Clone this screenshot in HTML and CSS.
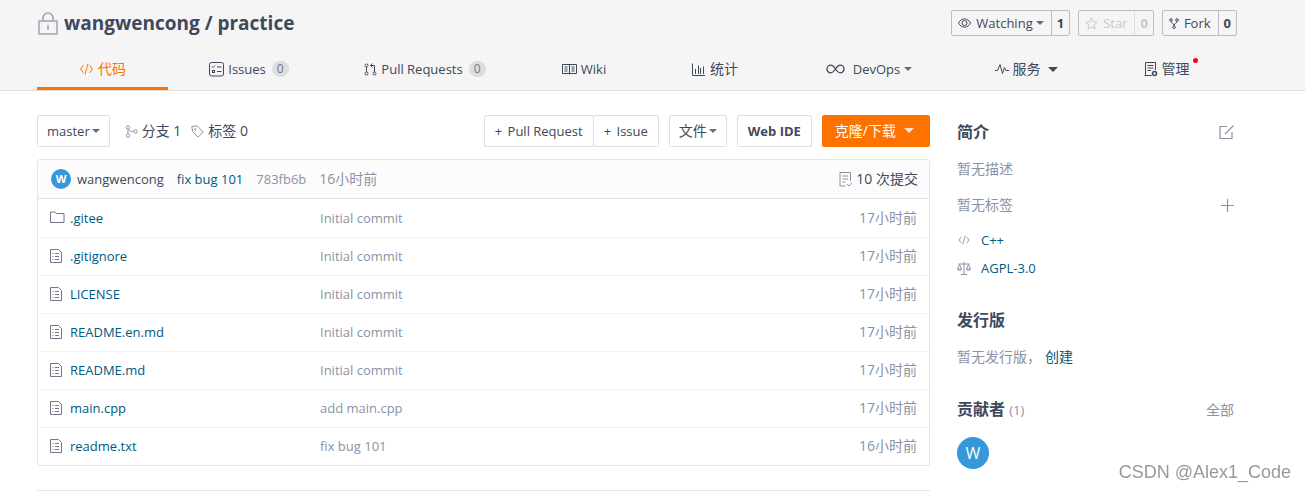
FILE: index.html
```html
<!DOCTYPE html>
<html lang="zh-CN">
<head>
    <meta charset="UTF-8">
    <title>wangwencong / practice</title>
    <link rel="stylesheet" href="styles.css">
</head>
<body>
    <!-- shared icons -->
    <svg class="sprite" aria-hidden="true">
        <symbol id="i-file" viewBox="0 0 12 14"><path d="M.5.5h8l3 3v10H.5z"/><path d="M2.500 4.500h1M5 4.500h4M2.500 7.500h1M5 7.500h4M2.500 10.500h1M5 10.500h4"/></symbol>
        <symbol id="i-code" viewBox="0 0 14 12"><path d="M4 2L1 6l3 4M10 2l3 4-3 4M8.500 0.500l-3 11"/></symbol>
    </svg>

    <header class="header">
        <div class="title-row">
            <h1>
                <svg class="lock" width="21" height="23" viewBox="0 0 21 23"><path d="M2 9h18v13H2zM6 9V6a5 5 0 0 1 10 0v3" stroke-width="1.500"/><path d="M11 13v5" stroke-width="1.500"/></svg>
                <span><a href="#">wangwencong</a> / <a href="#">practice</a></span>
            </h1>
            <div class="actions">
                <div class="counter">
                    <button type="button">
                        <svg width="13" height="10" viewBox="0 0 13 10"><path d="M.5 5C3-.5 10-.5 12.500 5 10 10.500 3 10.500.5 5z"/><circle cx="6.500" cy="5" r="2.500"/></svg>
                        Watching<i class="caret"></i>
                    </button>
                    <a href="#">1</a>
                </div>
                <div class="counter muted">
                    <button type="button" disabled>
                        <svg width="13" height="13" viewBox="0 0 13 13"><path d="M6.500 1l1.700 3.700 4 .5-3 2.700.8 4-3.500-2-3.500 2 .8-4-3-2.700 4-.5z"/></svg>
                        Star
                    </button>
                    <a href="#">0</a>
                </div>
                <div class="counter">
                    <button type="button">
                        <svg width="10" height="11" viewBox="0 0 10 11"><circle cx="2" cy="2" r="1.300"/><circle cx="8" cy="2" r="1.300"/><circle cx="5" cy="9.200" r="1.300"/><path d="M2 3.500C2 5.500 5 5 5 7.500M8 3.500C8 5.500 5 5 5 7.500"/></svg>
                        Fork
                    </button>
                    <a href="#">0</a>
                </div>
            </div>
        </div>

        <nav class="tabs">
            <a href="#" class="tab tab-code active"><svg width="15" height="12"><use href="#i-code"/></svg>代码</a>
            <a href="#" class="tab tab-issues">
                <svg width="15" height="15" viewBox="0 0 15 15"><rect x=".5" y=".5" width="14" height="13.500" rx="2"/><path d="M3 4.500l1 1 2-2M8 5h4.500M8 9.500h4.500"/><rect x="3.500" y="8.500" width="2" height="2"/></svg>
                <span class="latin">Issues</span><span class="badge">0</span>
            </a>
            <a href="#" class="tab tab-pulls">
                <svg width="13" height="13" viewBox="0 0 13 13"><circle cx="2.500" cy="2.500" r="1.500"/><circle cx="2.500" cy="10.500" r="1.500"/><circle cx="10.500" cy="10.500" r="1.500"/><path d="M2.500 4v5M10.500 9V2.500H6.500M8.500.5l-2 2 2 2"/></svg>
                <span class="latin">Pull Requests</span><span class="badge">0</span>
            </a>
            <a href="#" class="tab tab-wiki">
                <svg width="15" height="12" viewBox="0 0 15 12"><path d="M.5 1.500h14v9H.5zM7.500 1.500v10M2.500 4h3M2.500 6h3M2.500 8h3M9.500 4h3M9.500 6h3M9.500 8h3"/></svg>
                <span class="latin">Wiki</span>
            </a>
            <a href="#" class="tab tab-stats">
                <svg width="14" height="13" viewBox="0 0 14 13"><path d="M.5.5v12H13M3.500 11V6M6.500 11V2.500M8.500 11V5M11.500 11V3.500"/></svg>
                统计
            </a>
            <a href="#" class="tab tab-devops">
                <svg class="infinity" width="19" height="10" viewBox="0 0 19 10"><path d="M9.500 5C7.500 2 6.500 1.200 4.800 1.200a3.800 3.800 0 0 0 0 7.600C6.500 8.800 7.500 8 9.500 5s3-3.800 4.700-3.800a3.800 3.800 0 0 1 0 7.600C12.500 8.800 11.500 8 9.500 5z" stroke-width="1.300"/></svg>
                <span class="latin">DevOps</span><i class="caret"></i>
            </a>
            <a href="#" class="tab tab-service">
                <svg width="14" height="12" viewBox="0 0 14 12"><path d="M0 7.500h2.500L5 1.500l2.500 9 2-6 1.500 3h3"/></svg>
                服务<i class="caret wide"></i>
            </a>
            <a href="#" class="tab tab-manage">
                <svg width="14" height="15" viewBox="0 0 14 15"><path d="M7.500 13.500h-6V.5h10v7.500M3.500 3.500h6M3.500 6h6M3.500 8.500h3.500M.5 13.500h7"/><circle cx="10.500" cy="11.500" r="2" stroke-width="1.500"/></svg>
                <span class="dotted">管理</span>
            </a>
        </nav>
    </header>

    <div class="content">
        <main>
            <div class="toolbar">
                <button type="button" class="btn">master<i class="caret"></i></button>
                <div class="refs">
                    <a href="#"><svg width="13" height="13" viewBox="0 0 13 13"><circle cx="3" cy="2.500" r="1.700"/><circle cx="3" cy="10.500" r="1.700"/><circle cx="10.500" cy="6.500" r="1.700"/><path d="M3 4.500v4M3.500 4.500c1 1.500 2.500 2 5 2"/></svg>分支 1</a>
                    <a href="#"><svg width="13" height="13" viewBox="0 0 13 13"><path d="M.8 1.500l5.200-.7 6.200 6.200-5 5.200L1.500 6.500z"/><circle cx="4.200" cy="4.200" r=".6"/></svg>标签 0</a>
                </div>
                <div class="toolbar-right">
                    <div class="btn-group">
                        <button type="button" class="btn"><span>+</span> Pull Request</button>
                        <button type="button" class="btn"><span>+</span> Issue</button>
                    </div>
                    <button type="button" class="btn zh">文件<i class="caret"></i></button>
                    <button type="button" class="btn bold">Web IDE</button>
                    <button type="button" class="btn orange zh">克隆/下载<i class="caret wide"></i></button>
                </div>
            </div>

            <section class="files">
                <div class="last-commit">
                    <span class="avatar small">W</span>
                    <a href="#" class="author">wangwencong</a>
                    <a href="#" class="link">fix bug 101</a>
                    <span class="grey">783fb6b</span>
                    <span class="grey zh">16小时前</span>
                    <a href="#" class="commits"><svg width="13" height="15" viewBox="0 0 13 15"><path d="M11.500 9V.5H1v13.500h5.500M3.500 4h5.500M3.500 7h5.500M3.500 10h3M8 12l2 2 3-3.500"/></svg>10 次提交</a>
                </div>
                <table>
                    <tbody>
                        <tr><td class="name"><a href="#"><svg width="15" height="13" viewBox="0 0 15 13"><path d="M.5 11.500V1h4.500l1.500 1.500h7.500v9z"/></svg>.gitee</a></td><td>Initial commit</td><td class="time">17小时前</td></tr>
                        <tr><td class="name"><a href="#"><svg width="12" height="14"><use href="#i-file"/></svg>.gitignore</a></td><td>Initial commit</td><td class="time">17小时前</td></tr>
                        <tr><td class="name"><a href="#"><svg width="12" height="14"><use href="#i-file"/></svg>LICENSE</a></td><td>Initial commit</td><td class="time">17小时前</td></tr>
                        <tr><td class="name"><a href="#"><svg width="12" height="14"><use href="#i-file"/></svg>README.en.md</a></td><td>Initial commit</td><td class="time">17小时前</td></tr>
                        <tr><td class="name"><a href="#"><svg width="12" height="14"><use href="#i-file"/></svg>README.md</a></td><td>Initial commit</td><td class="time">17小时前</td></tr>
                        <tr><td class="name"><a href="#"><svg width="12" height="14"><use href="#i-file"/></svg>main.cpp</a></td><td>add main.cpp</td><td class="time">17小时前</td></tr>
                        <tr><td class="name"><a href="#"><svg width="12" height="14"><use href="#i-file"/></svg>readme.txt</a></td><td>fix bug 101</td><td class="time">16小时前</td></tr>
                    </tbody>
                </table>
            </section>
            <section class="readme"></section>
        </main>

        <aside>
            <section class="about">
                <div class="side-head">
                    <h2>简介</h2>
                    <button type="button" class="icon-btn" aria-label="编辑"><svg width="15" height="15" viewBox="0 0 15 15"><path d="M8 1.500H1v12h12V7M6 9l8.500-8.500" stroke-width="1.200"/></svg></button>
                </div>
                <p>暂无描述</p>
                <div class="side-line">
                    <p>暂无标签</p>
                    <button type="button" class="icon-btn" aria-label="添加标签"><svg width="13" height="13" viewBox="0 0 13 13"><path d="M6.500 0v13M0 6.500h13" stroke-width="1.200"/></svg></button>
                </div>
                <ul class="meta">
                    <li><svg width="14" height="10"><use href="#i-code"/></svg><a href="#">C++</a></li>
                    <li><svg width="14" height="13" viewBox="0 0 14 13"><path d="M7 0v12M4 12.500h6M1.500 2h11M.5 7l2-4.500 2 4.500zM9.500 7l2-4.500 2 4.500zM.5 7c.5 1.800 3.500 1.800 4 0M9.500 7c.5 1.800 3.500 1.800 4 0"/></svg><a href="#">AGPL-3.0</a></li>
                </ul>
            </section>
            <section class="releases">
                <h2>发行版</h2>
                <p>暂无发行版，<a href="#">创建</a></p>
            </section>
            <section>
                <div class="side-head">
                    <h2>贡献者 <small>(1)</small></h2>
                    <a href="#" class="all">全部</a>
                </div>
                <span class="avatar">W</span>
            </section>
        </aside>
    </div>

    <div class="watermark">CSDN @Alex1_Code</div>
</body>
</html>
```
FILE: styles.css
```css
* {
    box-sizing: border-box;
}
body {
    margin: 0;
    font-family: "Open Sans", "Noto Sans CJK SC", sans-serif;
    font-size: 13px;
    line-height: 20px;
    color: #40485b;
    background: #fff;
}
h1, h2, p, ul {
    margin: 0;
    padding: 0;
}
a {
    color: inherit;
    text-decoration: none;
}
button {
    font: inherit;
    color: inherit;
    background: none;
    border: none;
    padding: 0;
    cursor: pointer;
}
svg {
    flex: none;
    fill: none;
    stroke: currentColor;
}
.sprite {
    position: absolute;
    width: 0;
    height: 0;
}
.caret {
    display: inline-block;
    border: 4px solid transparent;
    border-top-color: currentColor;
    border-bottom: 0;
    margin-left: 2px;
    vertical-align: 3px;
    opacity: 0.8;
}
.caret.wide {
    border-width: 5px;
    border-bottom: 0;
    margin-left: 8px;
}
.zh {
    font-size: 14px;
}

/* header */
.header {
    background: #f5f5f5;
    border-bottom: 1px solid #dcdddf;
    padding: 0 68px 0 37px;
}
.title-row {
    display: flex;
    justify-content: space-between;
    align-items: center;
    height: 46px;
}
h1 {
    display: flex;
    align-items: center;
    gap: 6px;
    font-size: 19px;
    line-height: 24px;
}
.lock {
    color: #9aa2b3;
}
.actions {
    display: flex;
    gap: 8px;
}
.counter {
    display: flex;
    height: 26px;
    border: 1px solid #b9bdc9;
    border-radius: 2px;
}
.counter button {
    display: flex;
    align-items: center;
    gap: 5px;
    padding: 0 7px 0 6px;
}
.counter .caret {
    margin-left: -2px;
}
.counter a {
    border-left: 1px solid #b9bdc9;
    padding: 2px 5px;
    font-weight: bold;
}
.counter.muted {
    color: #c6c7ca;
}
.muted a {
    border-color: #dcdddf;
}
.tabs {
    display: flex;
}
.tab {
    display: flex;
    align-items: center;
    justify-content: center;
    gap: 4px;
    flex: 1 1 0;
    height: 44px;
    font-size: 14px;
    padding-top: 2px;
}
.latin {
    font-size: 13px;
}
.tab-code { flex-grow: 131; }
.tab-issues { flex-grow: 162; }
.tab-pulls { flex-grow: 190; }
.tab-wiki { flex-grow: 128; }
.tab-stats { flex-grow: 134; }
.tab-devops { flex-grow: 174; }
.tab-service { flex-grow: 140; }
.tab-manage { flex-grow: 141; }
.tab.active {
    color: #fe7300;
    border-bottom: 3px solid #fe7300;
    padding-top: 4px;
}
.tab .caret {
    margin-left: 0;
}
.tab .caret.wide {
    margin-left: 3px;
    opacity: 1;
}
.infinity {
    margin-right: 4px;
}
.badge {
    min-width: 17px;
    height: 16px;
    border-radius: 8px;
    background: #dcdddf;
    color: #6f7789;
    font-size: 12px;
    line-height: 16px;
    text-align: center;
    margin-left: 2px;
}
.dotted {
    position: relative;
}
.dotted::after {
    content: "";
    position: absolute;
    top: -1px;
    right: -8px;
    width: 5px;
    height: 5px;
    border-radius: 50%;
    background: #f5001d;
}

/* content */
.content {
    display: grid;
    grid-template-columns: minmax(0, 1fr) 277px;
    gap: 27px;
    padding: 24px 71px 0 37px;
}
.toolbar {
    display: flex;
    align-items: center;
    margin-bottom: 12px;
}
.btn {
    height: 32px;
    padding: 0 9px;
    border: 1px solid #dce0e6;
    border-radius: 2px;
    white-space: nowrap;
}
.refs {
    display: flex;
    gap: 10px;
    margin-left: 15px;
    font-size: 14px;
}
.refs a {
    display: flex;
    align-items: center;
    gap: 4px;
}
.refs svg {
    color: #8c92a4;
}
.toolbar-right {
    display: flex;
    gap: 10px;
    margin-left: auto;
}
.btn-group {
    display: flex;
}
.btn-group .btn {
    padding: 0 10px;
}
.btn-group .btn + .btn {
    margin-left: -1px;
}
.btn-group span {
    margin-right: 2px;
}
.bold {
    padding: 0 10px;
    font-weight: bold;
}
.orange {
    background: #fe7300;
    border-color: #fe7300;
    color: #fff;
    padding: 0 15px 0 12px;
}
.files {
    border: 1px solid #e3e6ea;
    border-radius: 3px;
}
.last-commit {
    display: flex;
    align-items: center;
    gap: 13px;
    height: 39px;
    padding: 0 11px 0 13px;
    background: #fcfcfc;
    border-bottom: 1px solid #dce3e8;
}
.avatar {
    display: block;
    width: 32px;
    height: 32px;
    border-radius: 50%;
    background: #3498db;
    color: #fff;
    font-size: 16px;
    line-height: 32px;
    text-align: center;
}
.avatar.small {
    width: 20px;
    height: 20px;
    margin-right: -7px;
    font-size: 11px;
    font-weight: bold;
    line-height: 20px;
}
.link {
    color: #005980;
}
.grey {
    color: #8c92a4;
}
.commits {
    display: flex;
    align-items: center;
    gap: 4px;
    margin-left: auto;
    font-size: 14px;
}
.commits svg {
    color: #8c92a4;
}
table {
    width: 100%;
    border-collapse: collapse;
    table-layout: fixed;
}
td {
    height: 38px;
    padding: 0;
    color: #8c92a4;
    border-bottom: 1px solid #eff3f6;
}
tr:last-child td {
    border-bottom: none;
}
.name {
    width: 282px;
    padding-left: 12px;
}
.name a {
    display: flex;
    align-items: center;
    gap: 5px;
    color: #005980;
}
.name svg {
    color: #6f7789;
}
.name svg[width="12"] {
    margin-right: 3px;
}
.time {
    padding-right: 12px;
    font-size: 14px;
    text-align: right;
}
.readme {
    margin-top: 24px;
    border-top: 1px solid #e3e6ea;
    border-radius: 3px;
}

/* sidebar */
aside {
    font-size: 14px;
    color: #8c92a4;
    padding-top: 5px;
}
aside a {
    color: #005980;
}
h2 {
    font-size: 16px;
    line-height: 24px;
    color: #40485b;
}
h2 small {
    font-size: 13px;
    font-weight: normal;
    color: #8c92a4;
}
.side-head, .side-line {
    display: flex;
    justify-content: space-between;
    align-items: center;
}
.icon-btn {
    display: flex;
    color: #8c92a4;
}
.about p {
    margin: 15px 0 16px;
}
.about .side-line p {
    margin: 0;
}
.meta {
    list-style: none;
    font-size: 13px;
    margin-top: 15px;
}
.meta li {
    display: flex;
    align-items: center;
    gap: 10px;
    margin-bottom: 8px;
}
.releases {
    margin: 30px 0;
}
.releases p {
    margin-top: 15px;
}
.releases a {
    margin-left: 4px;
}
.side-head .all {
    color: #8c92a4;
}
.side-head + .avatar {
    margin-top: 15px;
}

.watermark {
    position: fixed;
    right: 14px;
    bottom: 7px;
    font-family: "Liberation Sans", sans-serif;
    font-size: 18px;
    line-height: 24px;
    color: #999;
}
```
